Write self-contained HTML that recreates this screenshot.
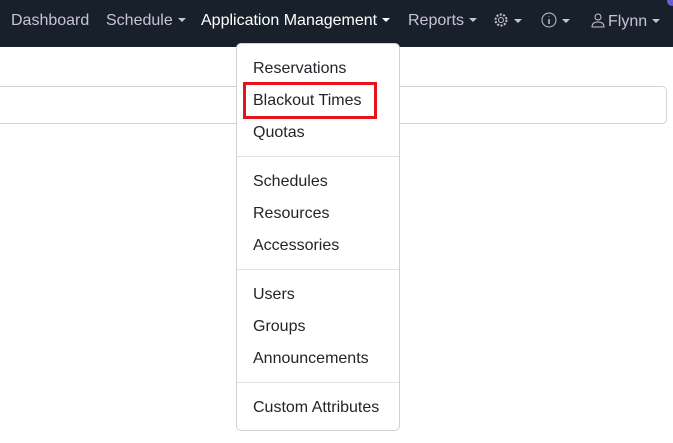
<html><head><style>
body{margin:0;width:673px;height:443px;background:#fff;font-family:"Liberation Sans",sans-serif;position:relative;overflow:hidden}
.nav{position:absolute;left:0;top:0;width:673px;height:47px;background:#18212b}
.n{position:absolute;top:12px;font-size:16px;color:#c9c2d6;white-space:nowrap}
.c::after{content:"";display:inline-block;margin-left:5px;vertical-align:3px;border-top:4px solid currentColor;border-left:4px solid transparent;border-right:4px solid transparent}
.inp{position:absolute;left:-5px;top:86px;width:670px;height:36px;border:1px solid #ced4da;border-radius:5px}
.dd{position:absolute;left:236px;top:43px;width:162px;height:386px;background:#fff;border:1px solid rgba(0,0,0,.18);border-radius:5px}
.i{position:absolute;left:16px;font-size:16px;color:#212529}
.d{position:absolute;left:0;right:0;height:1px;background:#e3e3e3}
.red{position:absolute;left:243px;top:82px;width:128px;height:31px;border:3px solid #e8131a}
</style></head><body>
<div class="nav">
<span class="n" style="left:11px">Dashboard</span>
<span class="n c" style="left:106px">Schedule</span>
<span class="n c" style="left:201px;color:#fff">Application Management</span>
<span class="n c" style="left:408px">Reports</span>
<span class="n c" style="left:493px"><svg width="16" height="16" viewBox="0 0 16 16" style="vertical-align:-2px"><circle cx="8" cy="8" r="2.5" fill="none" stroke="#c9c2d6"/><circle cx="8" cy="8" r="5.5" fill="none" stroke="#c9c2d6" stroke-dasharray="2 1.5" stroke-width="2"/></svg></span>
<span class="n c" style="left:541px"><svg width="16" height="16" viewBox="0 0 16 16" style="vertical-align:-2px"><circle cx="8" cy="8" r="7" fill="none" stroke="#c9c2d6"/><path d="M8 7v5M8 4.5v.5" stroke="#c9c2d6" stroke-width="1.4"/></svg></span>
<span class="n c" style="left:590px"><svg width="16" height="16" viewBox="0 0 16 16" style="vertical-align:-2px;margin-right:2px"><circle cx="8" cy="5" r="3" fill="none" stroke="#c9c2d6"/><path d="M2 15c0-4 3-5 6-5s6 1 6 5z" fill="none" stroke="#c9c2d6"/></svg>Flynn</span>
</div>
<div style="position:absolute;left:667px;top:-4px;width:10px;height:10px;border-radius:50%;background:#6b5bd6"></div>
<div class="inp"></div>
<div class="dd">
<span class="i" style="top:16px">Reservations</span>
<span class="i" style="top:48px">Blackout Times</span>
<span class="i" style="top:80px">Quotas</span>
<div class="d" style="top:112px"></div>
<span class="i" style="top:129px">Schedules</span>
<span class="i" style="top:161px">Resources</span>
<span class="i" style="top:193px">Accessories</span>
<div class="d" style="top:225px"></div>
<span class="i" style="top:242px">Users</span>
<span class="i" style="top:274px">Groups</span>
<span class="i" style="top:306px">Announcements</span>
<div class="d" style="top:338px"></div>
<span class="i" style="top:355px">Custom Attributes</span>
</div>
<div class="red"></div>
</body></html>
